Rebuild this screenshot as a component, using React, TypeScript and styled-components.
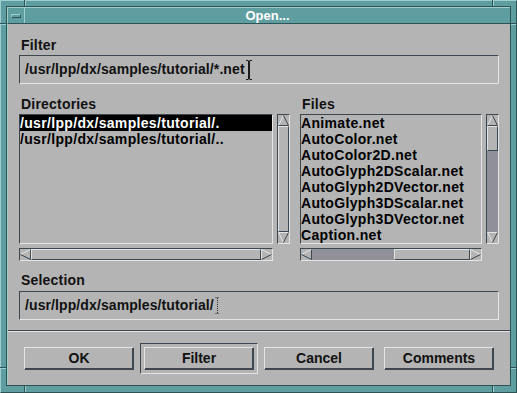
import React from 'react';
import styled, { createGlobalStyle } from 'styled-components';

const BG = '#b4b4b4';
const HI = '#e4e4e4';
const LO = '#3e464e';
const TROUGH = '#8f9098';
const TEAL = '#5f9ea0';
const TEAL_HI = '#9fcece';
const TEAL_LO = '#2d5355';
const FONT = `"Liberation Sans", Arial, Helvetica, sans-serif`;

const dirItems = ['/usr/lpp/dx/samples/tutorial/.', '/usr/lpp/dx/samples/tutorial/..'];
const fileItems = [
    'Animate.net',
    'AutoColor.net',
    'AutoColor2D.net',
    'AutoGlyph2DScalar.net',
    'AutoGlyph2DVector.net',
    'AutoGlyph3DScalar.net',
    'AutoGlyph3DVector.net',
    'Caption.net',
];
const buttons = ['OK', 'Filter', 'Cancel', 'Comments'];

type ArrowDir = 'up' | 'down' | 'left' | 'right';

const Arrow: React.FC<{ dir: ArrowDir }> = ({ dir }) => {
    // light edges first, dark edges second
    const shapes: Record<ArrowDir, { pts: string; hi: number[][]; lo: number[][] }> = {
        up: {
            pts: '5.5,0.5 0.5,10.5 10.5,10.5',
            hi: [[0.5, 10.5, 5.5, 0.5]],
            lo: [[5.5, 0.5, 10.5, 10.5], [0.5, 10.5, 10.5, 10.5]],
        },
        down: {
            pts: '0.5,0.5 10.5,0.5 5.5,10.5',
            hi: [[0.5, 0.5, 10.5, 0.5], [0.5, 0.5, 5.5, 10.5]],
            lo: [[10.5, 0.5, 5.5, 10.5]],
        },
        left: {
            pts: '0.5,5.5 10.5,0.5 10.5,10.5',
            hi: [[0.5, 5.5, 10.5, 0.5]],
            lo: [[0.5, 5.5, 10.5, 10.5], [10.5, 0.5, 10.5, 10.5]],
        },
        right: {
            pts: '0.5,0.5 10.5,5.5 0.5,10.5',
            hi: [[0.5, 0.5, 0.5, 10.5], [0.5, 0.5, 10.5, 5.5]],
            lo: [[0.5, 10.5, 10.5, 5.5]],
        },
    };
    const s = shapes[dir];
    return (
        <ArrowBox>
            <svg width="11" height="11" viewBox="0 0 11 11">
                <polygon points={s.pts} fill={BG} />
                {s.hi.map((l, i) => (
                    <line key={'h' + i} x1={l[0]} y1={l[1]} x2={l[2]} y2={l[3]} stroke={HI} strokeWidth="1" />
                ))}
                {s.lo.map((l, i) => (
                    <line key={'l' + i} x1={l[0]} y1={l[1]} x2={l[2]} y2={l[3]} stroke={LO} strokeWidth="1" />
                ))}
            </svg>
        </ArrowBox>
    );
};

const VScroll: React.FC<{ start: number; size: number }> = ({ start, size }) => (
    <VBar>
        <Arrow dir="up" />
        <Track>
            <Thumb $vertical $start={start} $size={size} />
        </Track>
        <Arrow dir="down" />
    </VBar>
);

const HScroll: React.FC<{ start: number; size: number }> = ({ start, size }) => (
    <HBar>
        <Arrow dir="left" />
        <Track>
            <Thumb $start={start} $size={size} />
        </Track>
        <Arrow dir="right" />
    </HBar>
);

const IBeam = () => (
    <svg width="6" height="20" viewBox="0 0 6 20">
        <path d="M0 0.5H2.5M3.5 0.5H6M0 19.5H2.5M3.5 19.5H6" stroke="#1a1a1a" strokeWidth="1" />
        <rect x="2" y="1" width="2" height="18" fill="#1a1a1a" />
    </svg>
);

const Caret = () => (
    <svg width="5" height="17" viewBox="0 0 5 17">
        <path d="M0.5 0.5H4.5M0.5 16.5H4.5" stroke="#2a2a2a" strokeWidth="1" strokeDasharray="1 1" />
        <path d="M2.5 1V16" stroke="#2a2a2a" strokeWidth="1" strokeDasharray="1 1" />
    </svg>
);

const FileList: React.FC<{ items: string[]; selected?: number }> = ({ items, selected }) => (
    <List>
        {items.map((it, i) => (
            <Row key={it} $selected={i === selected}>{it}</Row>
        ))}
    </List>
);

const App: React.FC = () => {
    return (
        <>
            <GlobalStyle />
            <Window>
                <Notch $vertical $x={24} $y={0} $len={6} />
                <Notch $vertical $x={492} $y={0} $len={6} />
                <Notch $x={0} $y={23} $len={6} />
                <Notch $x={511} $y={23} $len={5} />
                <Notch $x={0} $y={367} $len={6} />
                <Notch $x={511} $y={367} $len={5} />
                <Notch $vertical $x={24} $y={386} $len={6} />
                <Notch $vertical $x={492} $y={386} $len={6} />
                <Inner>
                    <TitleBar>
                        <MenuButton>
                            <MenuGlyph />
                        </MenuButton>
                        <Title>Open...</Title>
                    </TitleBar>
                    <Content>
                        <Body>
                            <Label>Filter</Label>
                            <Field>
                                <FieldText>/usr/lpp/dx/samples/tutorial/*.net</FieldText>
                                <IBeam />
                            </Field>
                            <Lists>
                                <DirColumn>
                                    <Label>Directories</Label>
                                    <ListRow>
                                        <FileList items={dirItems} selected={0} />
                                        <VScroll start={0} size={100} />
                                    </ListRow>
                                    <HScrollRow>
                                        <HScroll start={0} size={100} />
                                    </HScrollRow>
                                </DirColumn>
                                <FilesColumn>
                                    <Label>Files</Label>
                                    <ListRow>
                                        <FileList items={fileItems} />
                                        <VScroll start={0} size={24} />
                                    </ListRow>
                                    <HScrollRow>
                                        <HScroll start={52} size={48} />
                                    </HScrollRow>
                                </FilesColumn>
                            </Lists>
                            <SelLabel>Selection</SelLabel>
                            <SelField>
                                <FieldText>/usr/lpp/dx/samples/tutorial/</FieldText>
                                <Caret />
                            </SelField>
                        </Body>
                        <Separator />
                        <ButtonRow>
                            {buttons.map(b => (
                                <ButtonSlot key={b} $default={b === 'Filter'}>
                                    <PushButton>{b}</PushButton>
                                </ButtonSlot>
                            ))}
                        </ButtonRow>
                    </Content>
                </Inner>
            </Window>
        </>
    );
};

const GlobalStyle = createGlobalStyle`
    html, body {
        margin: 0;
        padding: 0;
        background: ${TEAL};
    }
    * {
        box-sizing: border-box;
    }
`;

const Window = styled.div`
    position: relative;
    width: 517px;
    height: 393px;
    display: flex;
    background: ${TEAL};
    border: 1px solid;
    border-color: ${TEAL_HI} ${TEAL_LO} ${TEAL_LO} ${TEAL_HI};
    padding: 5px 5px 6px 5px;
    font-family: ${FONT};
`;

const Notch = styled.div<{ $vertical?: boolean; $x: number; $y: number; $len: number }>`
    position: absolute;
    left: ${p => p.$x - 1}px;
    top: ${p => p.$y - 1}px;
    width: ${p => (p.$vertical ? 2 : p.$len)}px;
    height: ${p => (p.$vertical ? p.$len : 2)}px;
    border-style: solid;
    border-width: ${p => (p.$vertical ? '0 1px' : '1px 0')};
    border-color: ${TEAL_LO} ${TEAL_HI} ${TEAL_HI} ${TEAL_LO};
`;

const Inner = styled.div`
    flex: 1;
    display: flex;
    flex-direction: column;
    border: 1px solid ${TEAL_LO};
`;

const TitleBar = styled.div`
    height: 17px;
    display: flex;
    background: ${TEAL};
    border-top: 1px solid ${TEAL_HI};
    border-left: 1px solid ${TEAL_HI};
    border-bottom: 1px solid ${TEAL_LO};
`;

const MenuButton = styled.div`
    width: 17px;
    display: flex;
    align-items: center;
    justify-content: center;
    border-right: 1px solid ${TEAL_HI};
    padding-right: 1px;
`;

const MenuGlyph = styled.div`
    width: 10px;
    height: 4px;
    border: 1px solid;
    border-color: ${TEAL_HI} ${TEAL_LO} ${TEAL_LO} ${TEAL_HI};
`;

const Title = styled.div`
    flex: 1;
    text-align: center;
    color: #ffffff;
    font-weight: bold;
    font-size: 13px;
    line-height: 15px;
`;

const Content = styled.div`
    flex: 1;
    display: flex;
    flex-direction: column;
    background: ${BG};
    border-left: 1px solid ${TEAL_HI};
`;

const Body = styled.div`
    display: flex;
    flex-direction: column;
    padding: 12px 11px 0 11px;
`;

const Label = styled.div`
    height: 16px;
    line-height: 18px;
    padding-left: 2px;
    font-size: 14px;
    font-weight: bold;
    letter-spacing: 0.2px;
    color: #111;
`;

const SelLabel = styled(Label)`
    margin-top: 10px;
    line-height: 19px;
`;

const Field = styled.div`
    margin-top: 3px;
    height: 29px;
    display: flex;
    align-items: center;
    padding-left: 5px;
    border: 1px solid;
    border-color: ${LO} ${HI} ${HI} ${LO};
`;

const SelField = styled(Field)`
    margin-top: 4px;
`;

const FieldText = styled.span`
    font-size: 14px;
    font-weight: bold;
    letter-spacing: 0.1px;
    line-height: 27px;
    color: #111;
    margin-right: 1px;
`;

const Lists = styled.div`
    margin-top: 11px;
    display: flex;
    gap: 10px;
`;

const DirColumn = styled.div`
    width: 271px;
    display: flex;
    flex-direction: column;
`;

const FilesColumn = styled.div`
    flex: 1;
    display: flex;
    flex-direction: column;
`;

const ListRow = styled.div`
    margin-top: 3px;
    display: flex;
    gap: 4px;
`;

const HScrollRow = styled.div`
    margin-top: 4px;
    display: flex;
    padding-right: 17px;
`;

const List = styled.div`
    flex: 1;
    height: 130px;
    overflow: hidden;
    border: 1px solid;
    border-color: ${LO} ${HI} ${HI} ${LO};
`;

const Row = styled.div<{ $selected?: boolean }>`
    height: 16px;
    line-height: 16px;
    white-space: nowrap;
    font-size: 14px;
    font-weight: bold;
    letter-spacing: 0.33px;
    background: ${p => (p.$selected ? '#000' : 'transparent')};
    color: ${p => (p.$selected ? '#fff' : '#000')};
`;

const VBar = styled.div`
    width: 13px;
    height: 130px;
    display: flex;
    flex-direction: column;
    background: ${TROUGH};
    border: 1px solid;
    border-color: ${LO} ${HI} ${HI} ${LO};
`;

const HBar = styled.div`
    flex: 1;
    height: 13px;
    display: flex;
    background: ${TROUGH};
    border: 1px solid;
    border-color: ${LO} ${HI} ${HI} ${LO};
`;

const ArrowBox = styled.div`
    width: 11px;
    height: 11px;
    flex: none;
    background: ${BG};
    svg {
        display: block;
    }
`;

const Track = styled.div`
    flex: 1;
    position: relative;
`;

const Thumb = styled.div<{ $vertical?: boolean; $start: number; $size: number }>`
    position: absolute;
    ${p =>
        p.$vertical
            ? `left: 0; right: 0; top: ${p.$start}%; height: ${p.$size}%;`
            : `top: 0; bottom: 0; left: ${p.$start}%; width: ${p.$size}%;`}
    background: ${BG};
    border: 1px solid;
    border-color: ${HI} ${LO} ${LO} ${HI};
`;

const Separator = styled.div`
    margin-top: 10px;
    height: 2px;
    border-top: 1px solid ${LO};
    border-bottom: 1px solid ${HI};
`;

const ButtonRow = styled.div`
    padding-top: 11px;
    display: flex;
    justify-content: center;
    gap: 2px;
`;

const ButtonSlot = styled.div<{ $default?: boolean }>`
    width: 118px;
    padding: 3px;
    border: 1px solid;
    border-color: ${p => (p.$default ? `${LO} ${HI} ${HI} ${LO}` : 'transparent')};
`;

const PushButton = styled.div`
    height: 23px;
    line-height: 20px;
    text-align: center;
    font-size: 14px;
    font-weight: bold;
    color: #111;
    border: 1px solid;
    border-color: ${HI} ${LO} ${LO} ${HI};
    box-shadow: inset -1px -1px 0 ${LO};
`;

export default App;
